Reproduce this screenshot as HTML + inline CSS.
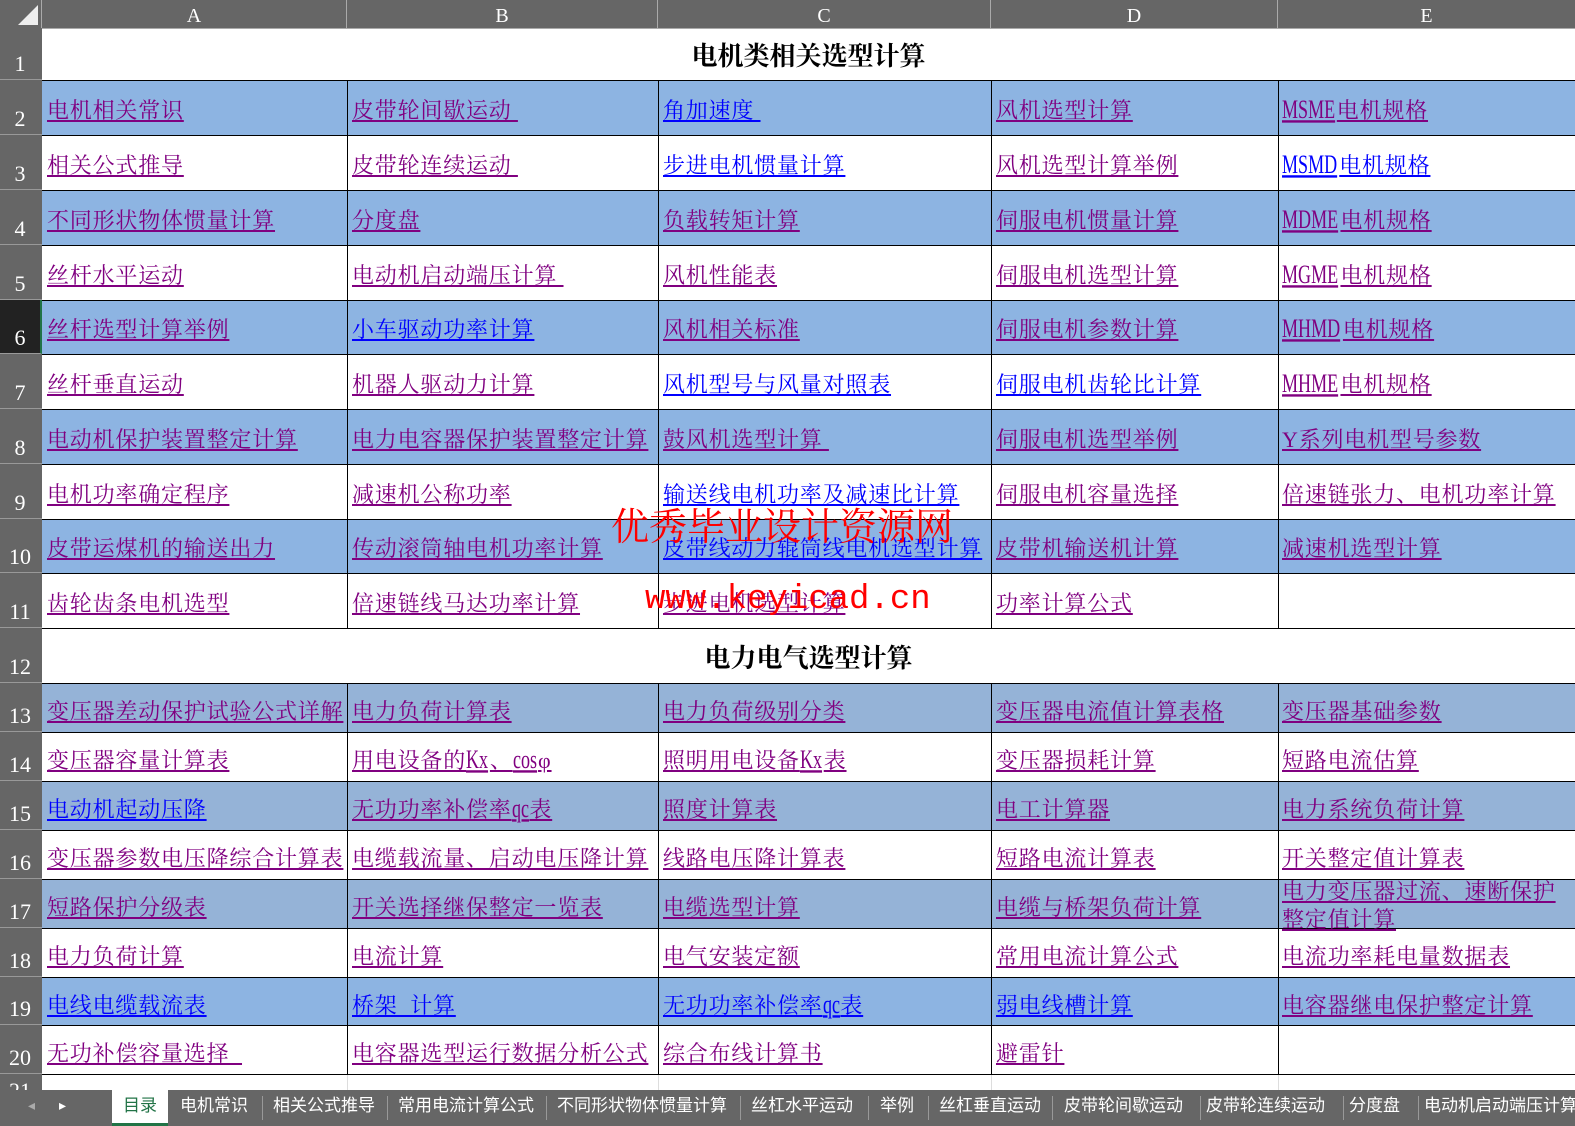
<!DOCTYPE html>
<html><head><meta charset="utf-8"><style>
*{margin:0;padding:0;box-sizing:border-box}
body{width:1575px;height:1126px;position:relative;overflow:hidden;background:#fff;font-family:"Liberation Serif","Noto Serif CJK SC",serif}
div{position:absolute}
.bg1{left:42px;width:1533px;background:#8db4e2}
.bg2{left:42px;width:1533px;background:#95b3d7}
.h{left:42px;width:1533px;height:1px;background:#000}
.v{width:1px;background:#000}
.c{white-space:nowrap;font-size:22px;line-height:26px;text-decoration:underline;color:#800080;letter-spacing:0.8px;margin-top:3px}
.b{color:#0000ff}
.n{display:inline-block;transform:scale(0.82,1.2);transform-origin:left 80%;margin-right:-10px;text-decoration:underline;letter-spacing:0}
.rh{left:0;width:42px;background:#666;color:#fff;font-size:22px;text-align:center;border-bottom:1px solid #999}
.rh span{position:absolute;bottom:2px;left:0;width:40px;text-align:center}
.ch{top:0;height:28px;background:#666;color:#fff;font-size:20px;text-align:center;line-height:32px;border-right:1px solid #aaa}
.t{font-weight:bold;font-size:26px;left:42px;width:1533px;text-align:center;color:#000}
.tab{top:1093px;height:33px;color:#fff;font-family:"Liberation Sans","Noto Sans CJK SC",sans-serif;font-size:17px;line-height:22px;padding-top:2px;white-space:nowrap}
.sep{top:1096px;width:1px;height:24px;background:#999}
.wm{color:#f00;white-space:nowrap}
</style></head><body>
<div style="left:0;top:0;width:42px;height:28px;background:#666;border-right:1px solid #aaa"></div>
<div style="left:18px;top:5px;width:0;height:0;border-left:20px solid transparent;border-bottom:20px solid #eee"></div>
<div class="ch" style="left:42px;width:305px">A</div>
<div class="ch" style="left:347px;width:311px">B</div>
<div class="ch" style="left:658px;width:333px">C</div>
<div class="ch" style="left:991px;width:287px">D</div>
<div class="ch" style="left:1278px;width:297px;border-right:none">E</div>
<div style="left:0;top:28px;width:1575px;height:1px;background:#aaa"></div>

<div class="bg1" style="top:80px;height:55px"></div>
<div class="bg1" style="top:190px;height:55px"></div>
<div class="bg1" style="top:300px;height:54px"></div>
<div class="bg1" style="top:409px;height:55px"></div>
<div class="bg1" style="top:519px;height:54px"></div>
<div class="bg2" style="top:683px;height:49px"></div>
<div class="bg2" style="top:781px;height:49px"></div>
<div class="bg2" style="top:879px;height:49px"></div>
<div class="bg1" style="top:977px;height:48px"></div>

<div class="h" style="top:80px"></div><div class="h" style="top:135px"></div><div class="h" style="top:190px"></div>
<div class="h" style="top:245px"></div><div class="h" style="top:300px"></div><div class="h" style="top:354px"></div>
<div class="h" style="top:409px"></div><div class="h" style="top:464px"></div><div class="h" style="top:519px"></div>
<div class="h" style="top:573px"></div><div class="h" style="top:628px"></div><div class="h" style="top:683px"></div>
<div class="h" style="top:732px"></div><div class="h" style="top:781px"></div><div class="h" style="top:830px"></div>
<div class="h" style="top:879px"></div><div class="h" style="top:928px"></div><div class="h" style="top:977px"></div>
<div class="h" style="top:1025px"></div><div class="h" style="top:1074px"></div>
<div class="v" style="left:347px;top:80px;height:548px"></div><div class="v" style="left:658px;top:80px;height:548px"></div>
<div class="v" style="left:991px;top:80px;height:548px"></div><div class="v" style="left:1278px;top:80px;height:548px"></div>
<div class="v" style="left:347px;top:683px;height:391px"></div><div class="v" style="left:658px;top:683px;height:391px"></div>
<div class="v" style="left:991px;top:683px;height:391px"></div><div class="v" style="left:1278px;top:683px;height:391px"></div>
<div style="left:347px;top:1075px;width:1px;height:18px;background:#ddd"></div>
<div style="left:658px;top:1075px;width:1px;height:18px;background:#ddd"></div>
<div style="left:991px;top:1075px;width:1px;height:18px;background:#ddd"></div>
<div style="left:1278px;top:1075px;width:1px;height:18px;background:#ddd"></div>

<div class="rh" style="top:28px;height:52px"><span>1</span></div>
<div class="rh" style="top:80px;height:55px"><span>2</span></div>
<div class="rh" style="top:135px;height:55px"><span>3</span></div>
<div class="rh" style="top:190px;height:55px"><span>4</span></div>
<div class="rh" style="top:245px;height:55px"><span>5</span></div>
<div class="rh" style="top:300px;height:54px;background:#222;border-right:2px solid #217346"><span>6</span></div>
<div class="rh" style="top:354px;height:55px"><span>7</span></div>
<div class="rh" style="top:409px;height:55px"><span>8</span></div>
<div class="rh" style="top:464px;height:55px"><span>9</span></div>
<div class="rh" style="top:519px;height:54px"><span>10</span></div>
<div class="rh" style="top:573px;height:55px"><span>11</span></div>
<div class="rh" style="top:628px;height:55px"><span>12</span></div>
<div class="rh" style="top:683px;height:49px"><span>13</span></div>
<div class="rh" style="top:732px;height:49px"><span>14</span></div>
<div class="rh" style="top:781px;height:49px"><span>15</span></div>
<div class="rh" style="top:830px;height:49px"><span>16</span></div>
<div class="rh" style="top:879px;height:49px"><span>17</span></div>
<div class="rh" style="top:928px;height:49px"><span>18</span></div>
<div class="rh" style="top:977px;height:48px"><span>19</span></div>
<div class="rh" style="top:1025px;height:49px"><span>20</span></div>
<div class="rh" style="top:1074px;height:19px;overflow:hidden"><span style="bottom:-12px">21</span></div>

<div class="t" style="top:36px">电机类相关选型计算</div>
<div class="t" style="top:638px">电力电气选型计算</div>

<div class="c" style="left:47px;top:95px">电机相关常识</div>
<div class="c" style="left:352px;top:95px">皮带轮间歇运动&nbsp;</div>
<div class="c b" style="left:663px;top:95px">角加速度&nbsp;</div>
<div class="c" style="left:996px;top:95px">风机选型计算</div>
<div class="c" style="left:1282px;top:95px"><span class="n">MSME</span>电机规格</div>

<div class="c" style="left:47px;top:150px">相关公式推导</div>
<div class="c" style="left:352px;top:150px">皮带轮连续运动&nbsp;</div>
<div class="c b" style="left:663px;top:150px">步进电机惯量计算</div>
<div class="c" style="left:996px;top:150px">风机选型计算举例</div>
<div class="c b" style="left:1282px;top:150px"><span class="n">MSMD</span>电机规格</div>

<div class="c" style="left:47px;top:205px">不同形状物体惯量计算</div>
<div class="c" style="left:352px;top:205px">分度盘</div>
<div class="c" style="left:663px;top:205px">负载转矩计算</div>
<div class="c" style="left:996px;top:205px">伺服电机惯量计算</div>
<div class="c" style="left:1282px;top:205px"><span class="n">MDME</span>电机规格</div>

<div class="c" style="left:47px;top:260px">丝杆水平运动</div>
<div class="c" style="left:352px;top:260px">电动机启动端压计算&nbsp;</div>
<div class="c" style="left:663px;top:260px">风机性能表</div>
<div class="c" style="left:996px;top:260px">伺服电机选型计算</div>
<div class="c" style="left:1282px;top:260px"><span class="n">MGME</span>电机规格</div>

<div class="c" style="left:47px;top:314px">丝杆选型计算举例</div>
<div class="c b" style="left:352px;top:314px">小车驱动功率计算</div>
<div class="c" style="left:663px;top:314px">风机相关标准</div>
<div class="c" style="left:996px;top:314px">伺服电机参数计算</div>
<div class="c" style="left:1282px;top:314px"><span class="n">MHMD</span>电机规格</div>

<div class="c" style="left:47px;top:369px">丝杆垂直运动</div>
<div class="c" style="left:352px;top:369px">机器人驱动力计算</div>
<div class="c b" style="left:663px;top:369px">风机型号与风量对照表</div>
<div class="c b" style="left:996px;top:369px">伺服电机齿轮比计算</div>
<div class="c" style="left:1282px;top:369px"><span class="n">MHME</span>电机规格</div>

<div class="c" style="left:47px;top:424px">电动机保护装置整定计算</div>
<div class="c" style="left:352px;top:424px">电力电容器保护装置整定计算</div>
<div class="c" style="left:663px;top:424px">鼓风机选型计算&nbsp;</div>
<div class="c" style="left:996px;top:424px">伺服电机选型举例</div>
<div class="c" style="left:1282px;top:424px">Y系列电机型号参数</div>

<div class="c" style="left:47px;top:479px">电机功率确定程序</div>
<div class="c" style="left:352px;top:479px">减速机公称功率</div>
<div class="c b" style="left:663px;top:479px">输送线电机功率及减速比计算</div>
<div class="c" style="left:996px;top:479px">伺服电机容量选择</div>
<div class="c" style="left:1282px;top:479px">倍速链张力、电机功率计算</div>

<div class="c" style="left:47px;top:533px">皮带运煤机的输送出力</div>
<div class="c" style="left:352px;top:533px">传动滚筒轴电机功率计算</div>
<div class="c b" style="left:663px;top:533px">皮带线动力辊筒线电机选型计算</div>
<div class="c" style="left:996px;top:533px">皮带机输送机计算</div>
<div class="c" style="left:1282px;top:533px">减速机选型计算</div>

<div class="c" style="left:47px;top:588px">齿轮齿条电机选型</div>
<div class="c" style="left:352px;top:588px">倍速链线马达功率计算</div>
<div class="c" style="left:663px;top:588px">步进电机选型计算</div>
<div class="c" style="left:996px;top:588px">功率计算公式</div>

<div class="c" style="left:47px;top:696px">变压器差动保护试验公式详解</div>
<div class="c" style="left:352px;top:696px">电力负荷计算表</div>
<div class="c" style="left:663px;top:696px">电力负荷级别分类</div>
<div class="c" style="left:996px;top:696px">变压器电流值计算表格</div>
<div class="c" style="left:1282px;top:696px">变压器基础参数</div>

<div class="c" style="left:47px;top:745px">变压器容量计算表</div>
<div class="c" style="left:352px;top:745px">用电设备的<span class="n" style="margin-right:-3px">Kx</span>、<span class="n" style="margin-right:-4px">cos</span>φ</div>
<div class="c" style="left:663px;top:745px">照明用电设备<span class="n" style="margin-right:-3px">Kx</span>表</div>
<div class="c" style="left:996px;top:745px">变压器损耗计算</div>
<div class="c" style="left:1282px;top:745px">短路电流估算</div>

<div class="c b" style="left:47px;top:794px">电动机起动压降</div>
<div class="c" style="left:352px;top:794px">无功功率补偿率<span class="n" style="margin-right:-3px">qc</span>表</div>
<div class="c" style="left:663px;top:794px">照度计算表</div>
<div class="c" style="left:996px;top:794px">电工计算器</div>
<div class="c" style="left:1282px;top:794px">电力系统负荷计算</div>

<div class="c" style="left:47px;top:843px">变压器参数电压降综合计算表</div>
<div class="c" style="left:352px;top:843px">电缆载流量、启动电压降计算</div>
<div class="c" style="left:663px;top:843px">线路电压降计算表</div>
<div class="c" style="left:996px;top:843px">短路电流计算表</div>
<div class="c" style="left:1282px;top:843px">开关整定值计算表</div>

<div class="c" style="left:47px;top:892px">短路保护分级表</div>
<div class="c" style="left:352px;top:892px">开关选择继保整定一览表</div>
<div class="c" style="left:663px;top:892px">电缆选型计算</div>
<div class="c" style="left:996px;top:892px">电缆与桥架负荷计算</div>
<div class="c" style="left:1282px;top:875px;line-height:28px">电力变压器过流、速断保护<br>整定值计算</div>

<div class="c" style="left:47px;top:941px">电力负荷计算</div>
<div class="c" style="left:352px;top:941px">电流计算</div>
<div class="c" style="left:663px;top:941px">电气安装定额</div>
<div class="c" style="left:996px;top:941px">常用电流计算公式</div>
<div class="c" style="left:1282px;top:941px">电流功率耗电量数据表</div>

<div class="c b" style="left:47px;top:990px">电线电缆载流表</div>
<div class="c b" style="left:352px;top:990px">桥架&nbsp;&nbsp;计算</div>
<div class="c b" style="left:663px;top:990px">无功功率补偿率<span class="n" style="margin-right:-3px">qc</span>表</div>
<div class="c b" style="left:996px;top:990px">弱电线槽计算</div>
<div class="c" style="left:1282px;top:990px">电容器继电保护整定计算</div>

<div class="c" style="left:47px;top:1038px">无功补偿容量选择&nbsp;&nbsp;</div>
<div class="c" style="left:352px;top:1038px">电容器选型运行数据分析公式</div>
<div class="c" style="left:663px;top:1038px">综合布线计算书</div>
<div class="c" style="left:996px;top:1038px">避雷针</div>

<div class="wm" style="left:611px;top:505px;font-size:38px;line-height:46px">优秀毕业设计资源网</div>
<div class="wm" style="left:645px;top:580px;font-family:'Liberation Mono',monospace;font-size:34px;line-height:40px">www.keyicad.cn</div>

<div style="left:0;top:1090px;width:1575px;height:36px;background:#666"></div>
<div style="left:28px;top:1098px;color:#aaa;font-size:14px;font-family:'DejaVu Sans',sans-serif">◂</div>
<div style="left:59px;top:1098px;color:#fff;font-size:14px;font-family:'DejaVu Sans',sans-serif">▸</div>
<div style="left:112px;top:1090px;width:56px;height:36px;background:#fff;border-bottom:3px solid #217346"></div>
<div class="tab" style="left:123px;color:#217346">目录</div>
<div class="tab" style="left:180px">电机常识</div>
<div class="sep" style="left:262px"></div>
<div class="tab" style="left:273px">相关公式推导</div>
<div class="sep" style="left:387px"></div>
<div class="tab" style="left:398px">常用电流计算公式</div>
<div class="sep" style="left:546px"></div>
<div class="tab" style="left:557px">不同形状物体惯量计算</div>
<div class="sep" style="left:740px"></div>
<div class="tab" style="left:751px">丝杠水平运动</div>
<div class="sep" style="left:868px"></div>
<div class="tab" style="left:880px">举例</div>
<div class="sep" style="left:928px"></div>
<div class="tab" style="left:939px">丝杠垂直运动</div>
<div class="sep" style="left:1052px"></div>
<div class="tab" style="left:1064px">皮带轮间歇运动</div>
<div class="sep" style="left:1200px"></div>
<div class="tab" style="left:1206px">皮带轮连续运动</div>
<div class="sep" style="left:1343px"></div>
<div class="tab" style="left:1349px">分度盘</div>
<div class="sep" style="left:1418px"></div>
<div class="tab" style="left:1424px">电动机启动端压计算</div>
</body></html>
